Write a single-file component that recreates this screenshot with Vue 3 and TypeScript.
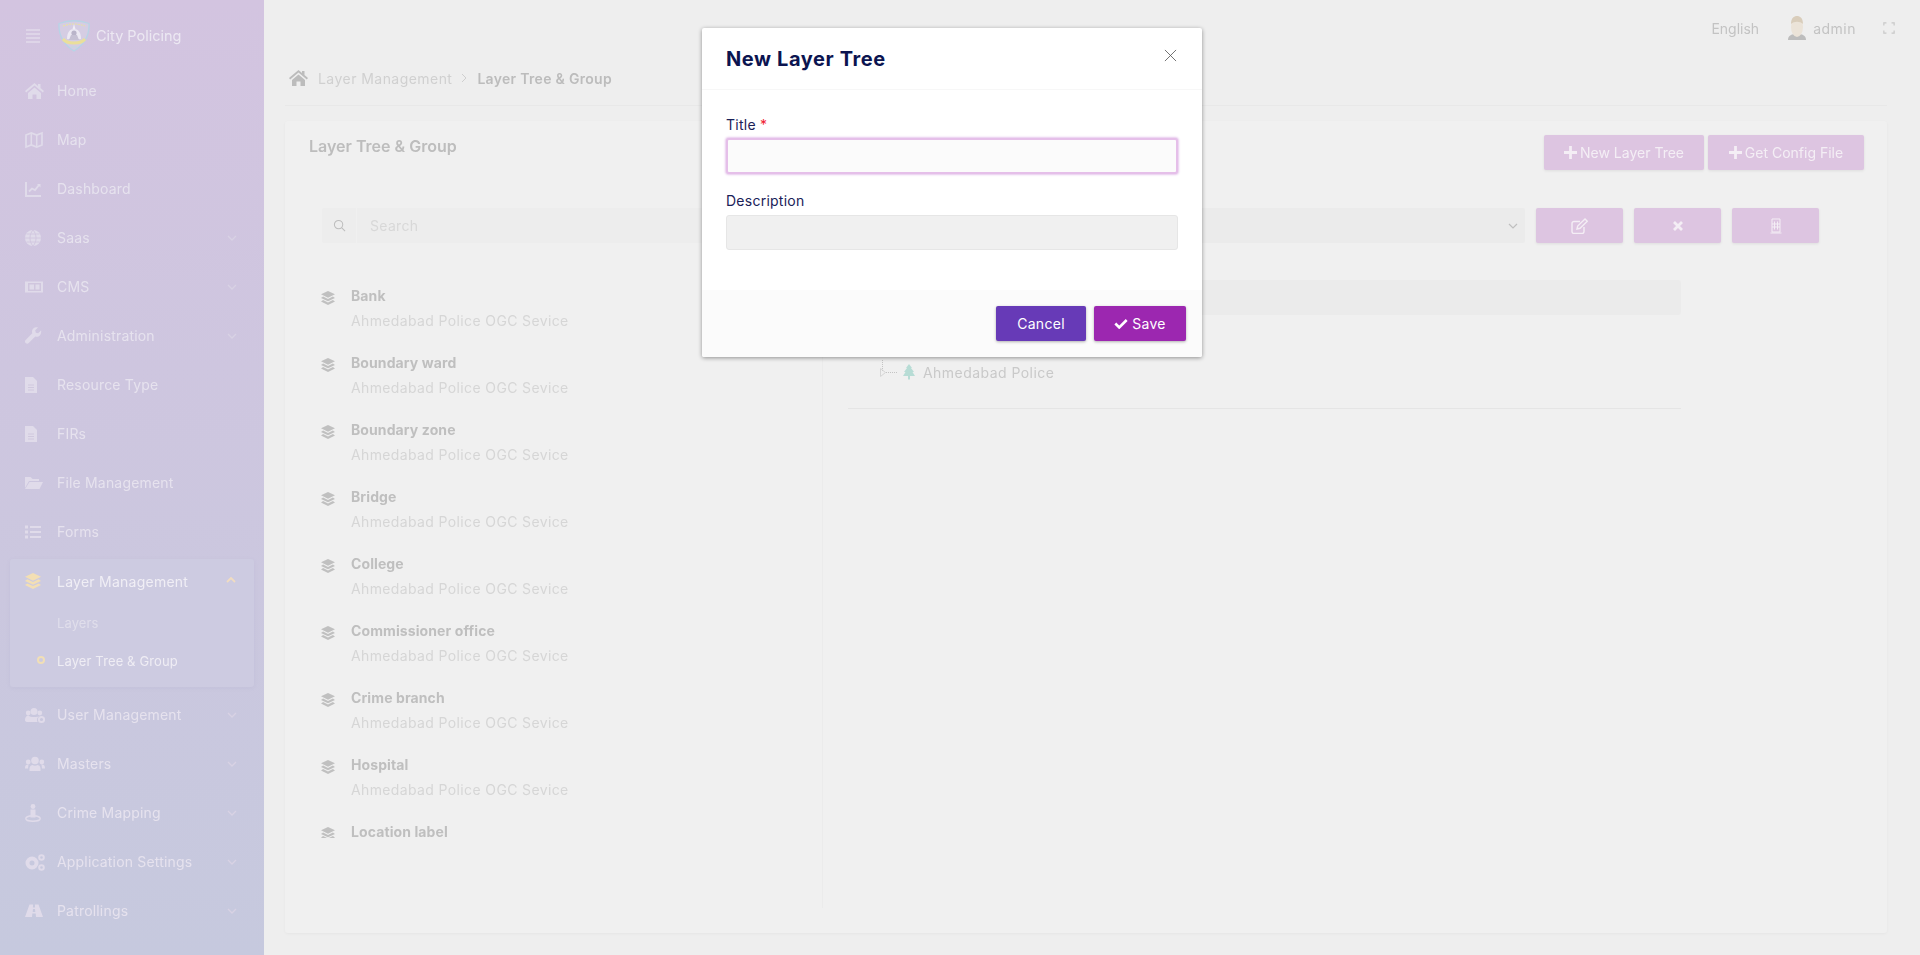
<template>
  <div class="root">
    <div class="page">
      <aside class="sidebar">
        <div class="brand">
          <svg class="burger" viewBox="0 0 14 14"><path d="M0 0h14v2H0zM0 4h14v2H0zM0 8h14v2H0zM0 12h14v2H0z" fill="currentColor" /></svg>
          <svg class="crest" viewBox="0 0 32 33">
            <path d="M1 4.500Q16 -1 31 4.500Q32 22 16 32Q0 22 1 4.500Z" fill="#d5cde3" stroke="#b7d4e6" stroke-width="1.300" />
            <path d="M5 7Q16 3 27 7" fill="none" stroke="#e7dfa8" stroke-width="1.200" stroke-dasharray="2 1" />
            <path d="M16 5l1.500 5h-3z" fill="#f0eef5" />
            <path d="M9 20c0-7 3-10 7-10s7 3 7 10z" fill="#ece9f3" />
            <circle cx="16" cy="14" r="2.600" fill="#b9b4c9" />
            <path d="M13 16h6l2 5H11z" fill="#c6c1d4" />
            <path d="M5 20Q8 24 16 24Q24 24 27 20" fill="none" stroke="#eadf9a" stroke-width="3" />
            <path d="M13 28h6" stroke="#c6d6e0" stroke-width="1.500" />
          </svg>
          <span class="brand-name">City Policing</span>
        </div>
        <nav class="menu">
          <div v-for="item in menuTop" :key="item.label" class="menu-item">
            <svg class="menu-icon" viewBox="0 0 20 20" v-html="icons[item.icon]"></svg>
            <span class="menu-label">{{ item.label }}</span>
            <svg v-if="item.arrow" class="chev" viewBox="0 0 10 6"><path d="M1 1l4 4 4-4" /></svg>
          </div>
          <div class="menu-open">
            <div class="menu-item open-head">
              <svg class="menu-icon active-icon" viewBox="0 0 20 20" v-html="icons.layers"></svg>
              <span class="menu-label active-label">Layer Management</span>
              <svg class="chev up" viewBox="0 0 10 6"><path d="M1 5l4-4 4 4" /></svg>
            </div>
            <div class="sub-item first">Layers</div>
            <div class="sub-item current"><i class="dot"></i>Layer Tree &amp; Group</div>
          </div>
          <div v-for="item in menuBottom" :key="item.label" class="menu-item">
            <svg class="menu-icon" viewBox="0 0 20 20" v-html="icons[item.icon]"></svg>
            <span class="menu-label">{{ item.label }}</span>
            <svg class="chev" viewBox="0 0 10 6"><path d="M1 1l4 4 4-4" /></svg>
          </div>
        </nav>
      </aside>

      <main class="content">
        <header class="topbar">
          <span class="lang">English</span>
          <span class="user">
            <svg class="avatar" viewBox="0 0 24 24">
              <path d="M3 24c0-5 4-6 9-6s9 1 9 6c-2 1-16 1-18 0z" fill="#bdbdbd" />
              <ellipse cx="12" cy="11" rx="6" ry="10" fill="#ebe3d8" />
              <path d="M6 8c0-6 3-8 6-8s6 2 6 8c-3-3-9-3-12 0z" fill="#d9cdbb" />
            </svg>
            <span class="user-name">admin</span>
          </span>
          <svg class="fullscreen" viewBox="0 0 14 14"><path d="M1 4V1h3M10 1h3v3M13 10v3h-3M4 13H1v-3" /></svg>
        </header>

        <div class="crumbs">
          <svg class="crumb-home" viewBox="0 0 20 20" v-html="icons.home"></svg>
          <span class="crumb">Layer Management</span>
          <svg class="crumb-sep" viewBox="0 0 6 10"><path d="M1 1l4 4-4 4" /></svg>
          <b class="crumb-current">Layer Tree &amp; Group</b>
        </div>

        <section class="card">
          <div class="card-head">
            <h2>Layer Tree &amp; Group</h2>
            <div class="head-actions">
              <button class="soft-btn new-tree"><svg class="plus" viewBox="0 0 14 14"><path d="M7 0v14M0 7h14" /></svg>New Layer Tree</button>
              <button class="soft-btn config"><svg class="plus" viewBox="0 0 14 14"><path d="M7 0v14M0 7h14" /></svg>Get Config File</button>
            </div>
          </div>
          <div class="card-body">
            <div class="left-col">
              <div class="search">
                <span class="search-icon">
                  <svg viewBox="0 0 14 14"><circle cx="6" cy="6" r="4.500" /><path d="M9.500 9.500L13 13" /></svg>
                </span>
                <span class="search-field">Search</span>
              </div>
              <ul class="groups">
                <li v-for="g in groups" :key="g.title">
                  <svg class="group-icon" viewBox="0 2 16 16" v-html="icons.layers"></svg>
                  <div>
                    <strong>{{ g.title }}</strong>
                    <p v-if="g.sub">{{ g.sub }}</p>
                  </div>
                </li>
              </ul>
            </div>
            <div class="right-col">
              <div class="selector">
                <div class="select">
                  <svg viewBox="0 0 10 6"><path d="M1 1l4 4 4-4" /></svg>
                </div>
                <button class="soft-btn tool">
                  <svg class="edit" viewBox="0 0 17 16"><path d="M13 9v4.500a2 2 0 0 1-2 2H3a2 2 0 0 1-2-2V5.500a2 2 0 0 1 2-2h6" /><path d="M6 11l.7-3 7.300-7 2.300 2.300-7.300 7z" /></svg>
                </button>
                <button class="soft-btn tool">
                  <svg class="cross" viewBox="0 0 12 12"><path d="M2 2l8 8M10 2l-8 8" /></svg>
                </button>
                <button class="soft-btn tool">
                  <svg class="door" viewBox="0 0 12 16"><path d="M2 1h8v13H2zM0.500 15h11M4.500 3.500v8M7.500 3.500v8M2 6h8M2 9h8" /></svg>
                </button>
              </div>
              <div class="tree-bar"></div>
              <div class="tree-node">
                <svg class="tree-lines" viewBox="0 0 22 24"><path class="dots" d="M2.500 0v12M6 12.500h11" /><path d="M.5 8.500l5 4-5 4z" /></svg>
                <svg class="tree-icon" viewBox="0 0 12 16"><path d="M6 0l3 4H8l3 4H9.500L12 12H7v3.500H5V12H0l2.500-4H1l3-4H3z" fill="#b7dcd5" /></svg>
                <span>Ahmedabad Police</span>
              </div>
              <div class="tree-rule"></div>
            </div>
          </div>
        </section>
      </main>
    </div>

    <div class="modal">
      <div class="modal-head">
        <h3>New Layer Tree</h3>
        <svg class="close" viewBox="0 0 14 14"><path d="M1 1l12 12M13 1L1 13" /></svg>
      </div>
      <div class="modal-body">
        <label class="field-label">Title <em>*</em></label>
        <input class="field focused" type="text" />
        <label class="field-label second">Description</label>
        <input class="field" type="text" />
      </div>
      <div class="modal-foot">
        <button class="btn cancel">Cancel</button>
        <button class="btn save">
          <svg viewBox="0 0 16 12"><path d="M1.500 6l4.500 4.500L14.500 2" /></svg>
          Save
        </button>
      </div>
    </div>
  </div>
</template>

<script setup lang="ts">
const icons: Record<string, string> = {
  home: '<path d="M9.500 2L0 10l1.200 1.400L9.500 4.600l8.300 6.800L19 10l-3.500-3V3H13v2z" fill="currentColor"/><path d="M9.500 6.500L3 12v6h4.500v-4.500h4V18H16v-6z" fill="currentColor"/>',
  map: '<path d="M1 5l5.300-2 5.400 2L17 3v12l-5.300 2-5.400-2L1 17z" fill="none" stroke="currentColor" stroke-width="1.700"/><path d="M6.300 3v12M11.700 5v12" stroke="currentColor" stroke-width="1.500"/>',
  chart: '<path d="M1 3v14h15" fill="none" stroke="currentColor" stroke-width="2"/><path d="M4 12.500l3-3 3 1.500 4-5" fill="none" stroke="currentColor" stroke-width="1.800"/><path d="M12 5h3.500v3.500z" fill="currentColor"/>',
  globe: '<circle cx="8" cy="10" r="8" fill="currentColor"/><path d="M0 10h16M8 2c-4 4-4 12 0 16M8 2c4 4 4 12 0 16M1.500 6h13M1.500 14h13" fill="none" stroke="#d2c8e0" stroke-width="1"/>',
  news: '<path d="M0 4.500h18v11H0z" fill="currentColor"/><path d="M3 6h13v8H3z" fill="#d0c6de"/><path d="M4.500 7.500h4.500v5H4.500zM10.500 7.500h4v5h-4z" fill="currentColor"/>',
  wrench: '<path d="M16 4.500l-2.800 2.800-2.400-.6-.6-2.400L13 1.500C10 .5 7 2.500 7 5.500c0 .7.100 1.300.3 1.800L.7 14c-1 1-1 2 0 3s2 1 3 0l6.600-6.600c3 1 6.200-1 5.900-5.900z" fill="currentColor"/>',
  file: '<path d="M0 2h8l4 4v12H0z" fill="currentColor"/><path d="M3 10h6M3 12.500h6M3 15h6" stroke="#d0c8de" stroke-width="1"/>',
  folder: '<path d="M0 4h5.500l2 2H14v2H4l-4 7z" fill="currentColor"/><path d="M4.500 9H18l-3.500 7H0z" fill="currentColor"/>',
  list: '<path d="M0 3.500h3v3H0zM0 8.500h3v3H0zM0 13.500h3v3H0zM5 4h11v2H5zM5 9h11v2H5zM5 14h11v2H5z" fill="currentColor"/>',
  layers: '<path d="M8 2l8 3.800-8 3.900-8-3.900z" fill="currentColor"/><path d="M2.400 8.300L0 9.900l8 3.900 8-3.900-2.400-1.600L8 11z" fill="currentColor"/><path d="M2.400 12.400L0 14l8 4 8-4-2.400-1.600L8 15.100z" fill="currentColor"/>',
  usercog: '<circle cx="9" cy="6.500" r="3.500" fill="currentColor"/><circle cx="3.200" cy="8" r="2.400" fill="currentColor"/><circle cx="14.800" cy="8" r="2.400" fill="currentColor"/><path d="M0 15c0-3 1.500-4.500 3.500-4.500 1 1 3 1.500 5.500 1.500s5-.5 5-.5c-2 1-2.500 3-1.500 5.500H3c-2 0-3-.5-3-2z" fill="currentColor"/><circle cx="16.500" cy="14.500" r="2.600" fill="none" stroke="currentColor" stroke-width="2"/>',
  users: '<circle cx="10" cy="6.500" r="3.800" fill="currentColor"/><circle cx="3.200" cy="8" r="2.400" fill="currentColor"/><circle cx="16.800" cy="8" r="2.400" fill="currentColor"/><path d="M4.500 17v-2.500c0-2.500 2-3.500 3-3.500 1.500 1 3.500 1 5 0 1 0 3 1 3 3.500V17zM0 14c0-2.500 1-3.500 3.500-3.500L3 14.500H0zM20 14c0-2.500-1-3.500-3.500-3.500l.5 4h3z" fill="currentColor"/>',
  pin: '<circle cx="8" cy="3.500" r="2.400" fill="currentColor"/><path d="M5.500 6.500h5v8h-5z" fill="currentColor"/><ellipse cx="8" cy="15.500" rx="7.200" ry="2.800" fill="none" stroke="currentColor" stroke-width="1.400"/>',
  cogs: '<circle cx="7" cy="11" r="4.500" fill="none" stroke="currentColor" stroke-width="4"/><circle cx="16.500" cy="5.500" r="2.300" fill="none" stroke="currentColor" stroke-width="2"/><circle cx="16.500" cy="15.500" r="2.300" fill="none" stroke="currentColor" stroke-width="2"/>',
  road: '<path d="M4.500 3.500h3.600l-.2 3h2.200l-.2-3h3.600L18 16h-7l-.3-3.500H7.300L7 16H0zM8 8l-.3 3h2.600L10 8z" fill="currentColor"/>',
}

const menuTop = [
  { label: 'Home', icon: 'home' },
  { label: 'Map', icon: 'map' },
  { label: 'Dashboard', icon: 'chart' },
  { label: 'Saas', icon: 'globe', arrow: true },
  { label: 'CMS', icon: 'news', arrow: true },
  { label: 'Administration', icon: 'wrench', arrow: true },
  { label: 'Resource Type', icon: 'file' },
  { label: 'FIRs', icon: 'file' },
  { label: 'File Management', icon: 'folder' },
  { label: 'Forms', icon: 'list' },
]

const menuBottom = [
  { label: 'User Management', icon: 'usercog' },
  { label: 'Masters', icon: 'users' },
  { label: 'Crime Mapping', icon: 'pin' },
  { label: 'Application Settings', icon: 'cogs' },
  { label: 'Patrollings', icon: 'road' },
]

const sub = 'Ahmedabad Police OGC Sevice'
const groups = [
  { title: 'Bank', sub },
  { title: 'Boundary ward', sub },
  { title: 'Boundary zone', sub },
  { title: 'Bridge', sub },
  { title: 'College', sub },
  { title: 'Commissioner office', sub },
  { title: 'Crime branch', sub },
  { title: 'Hospital', sub },
  { title: 'Location label', sub: '' },
]
</script>

<style>
html,
body {
  margin: 0;
  height: 100%;
  overflow: hidden;
  background: #eee;
}
</style>

<style scoped>
.root {
  width: 1920px;
  height: 955px;
  position: relative;
  overflow: hidden;
  font-family: Inter, "Open Sans", sans-serif;
  font-size: 14px;
  background: #eee;
}
.page {
  display: flex;
  height: 955px;
  filter: blur(0.7px);
}

/* sidebar */
.sidebar {
  width: 264px;
  flex: none;
  height: 955px;
  background: linear-gradient(180deg, #d3c4e0 0%, #c6c9de 100%);
  color: #e4deec;
}
.brand {
  height: 66px;
  display: flex;
  align-items: center;
  padding: 5px 0 0 26px;
  box-sizing: border-box;
}
.burger {
  width: 14px;
  height: 14px;
  color: #ded5e8;
}
.crest {
  width: 32px;
  height: 33px;
  margin-left: 18px;
}
.brand-name {
  margin-left: 6px;
  font-size: 14.5px;
  color: #ece8f2;
}
.menu {
  display: flex;
  flex-direction: column;
}
.menu-item {
  height: 49px;
  display: flex;
  align-items: center;
  padding: 0 18px 0 25px;
  box-sizing: border-box;
}
.menu-icon {
  width: 20px;
  height: 20px;
  flex: none;
  color: #e0dbea;
}
.menu-label {
  margin-left: 12px;
  color: #e6e2ee;
  letter-spacing: 0.18px;
  flex: 1;
}
.chev {
  width: 10px;
  height: 6px;
  margin-right: 9px;
  fill: none;
  stroke: #d8d2e4;
  stroke-width: 1.3;
}
.chev.up {
  stroke: #f1dcc0;
  stroke-width: 1.8;
  margin-right: 18px;
  margin-top: -2px;
}
.menu-open {
  margin: 3px 10px;
  height: 128px;
  background: #cdcbe1;
  box-shadow: 0 1px 4px rgba(120, 110, 160, 0.08);
  border-radius: 3px;
}
.open-head {
  padding-left: 15px;
  padding-right: 0;
  height: 44px;
}
.active-icon {
  color: #f3dfb4;
}
.active-label {
  color: #f0eef5;
  letter-spacing: 0.25px;
}
.sub-item {
  height: 37px;
  line-height: 37px;
  padding-left: 47px;
  font-size: 13px;
  letter-spacing: 0.12px;
  color: #e0deeb;
  position: relative;
}
.sub-item.first {
  margin-top: 2px;
  margin-bottom: 1px;
}
.sub-item.current {
  color: #efedf4;
}
.dot {
  position: absolute;
  left: 27px;
  top: 13px;
  width: 4px;
  height: 4px;
  border: 2px solid #f1dfb6;
  border-radius: 50%;
}

/* main */
.content {
  flex: 1;
  min-width: 0;
  padding: 0 33px 0 21px;
  box-sizing: border-box;
  background: #eee;
}
.topbar {
  height: 56px;
  display: flex;
  justify-content: flex-end;
  align-items: center;
  color: #c3c3c3;
}
.lang {
  margin-right: 26px;
}
.user {
  display: flex;
  align-items: center;
  gap: 4px;
}
.user-name {
  letter-spacing: 0.5px;
}
.avatar {
  width: 24px;
  height: 24px;
}
.fullscreen {
  width: 12px;
  height: 12px;
  margin-left: 27px;
  margin-right: -8px;
  fill: none;
  stroke: #c8c8c8;
  stroke-width: 1.4;
}
.crumbs {
  height: 44px;
  display: flex;
  align-items: center;
  border-bottom: 1px solid #e8e8e8;
  padding: 0 4px 5px;
}
.crumb-home {
  width: 20px;
  height: 20px;
  color: #bcbcbc;
}
.crumb {
  margin-left: 9px;
  color: #d0d0d0;
  letter-spacing: 0.45px;
}
.crumb-sep {
  width: 6px;
  height: 10px;
  margin: 0 10px 0 9px;
  fill: none;
  stroke: #cfcfcf;
  stroke-width: 1;
}
.crumb-current {
  font-weight: 600;
  color: #bcbcbc;
  letter-spacing: 0.3px;
}
.card {
  margin-top: 15px;
  height: 812px;
  background: #f0f0f0;
  border-radius: 3px;
  box-shadow: 0 1px 3px rgba(0, 0, 0, 0.04);
}
.card-head {
  display: flex;
  justify-content: space-between;
  padding: 14px 23px 0 24px;
  height: 73px;
  box-sizing: border-box;
}
.card-head h2 {
  margin: 1px 0 0;
  font-size: 16px;
  line-height: 20px;
  font-weight: 600;
  color: #bdbdbd;
}
.head-actions {
  display: flex;
  gap: 4px;
}
.soft-btn {
  height: 35px;
  border: none;
  border-radius: 2px;
  background: #ddc5e1;
  color: #f4eef5;
  font: inherit;
  padding: 0;
  box-shadow: 0 1px 3px rgba(0, 0, 0, 0.08);
  display: flex;
  align-items: center;
  justify-content: center;
}
.new-tree {
  width: 160px;
}
.config {
  width: 156px;
}
.plus {
  width: 13px;
  height: 13px;
  margin-right: 3px;
  fill: none;
  stroke: #f4eef5;
  stroke-width: 3;
}
.card-body {
  display: flex;
  padding-top: 14px;
}
.left-col {
  width: 538px;
  flex: none;
  padding-left: 37px;
  box-sizing: border-box;
  border-right: 1px solid #ebebeb;
  height: 700px;
}
.search {
  display: flex;
  height: 35px;
  background: #ededed;
  border-radius: 2px;
  width: 480px;
}
.search-icon {
  width: 34px;
  display: flex;
  align-items: center;
  justify-content: center;
  border-right: 1px solid #f0f0f0;
}
.search-icon svg {
  width: 13px;
  height: 13px;
  fill: none;
  stroke: #bdbdbd;
  stroke-width: 1.1;
}
.search-field {
  padding-left: 13px;
  line-height: 35px;
  color: #d8d8d8;
  letter-spacing: 0.3px;
}
.groups {
  list-style: none;
  margin: 44px 0 0 -1px;
  padding: 0;
}
.groups li {
  display: flex;
  height: 67px;
  gap: 16px;
}
.group-icon {
  width: 14px;
  height: 14px;
  margin-top: 4px;
  color: #c0c0c0;
  flex: none;
}
.groups li:last-child .group-icon {
  clip-path: inset(0 0 22% 0);
}
.groups strong {
  display: block;
  font-weight: 700;
  color: #bfbfbf;
  letter-spacing: 0.1px;
}
.groups p {
  margin: 8px 0 0;
  color: #d6d6d6;
  letter-spacing: 0.37px;
}
.right-col {
  flex: 1;
  padding-left: 25px;
  min-width: 0;
}
.selector {
  display: flex;
  align-items: center;
  gap: 11px;
  padding-right: 68px;
}
.select {
  flex: 1;
  height: 35px;
  background: #ebebeb;
  border-radius: 2px;
  display: flex;
  align-items: center;
  justify-content: flex-end;
  padding-right: 7px;
}
.select svg {
  width: 10px;
  height: 6px;
  fill: none;
  stroke: #bfbfbf;
  stroke-width: 1.2;
}
.tool {
  width: 87px;
}
.tool svg {
  fill: none;
  stroke: #f4eef5;
}
.edit {
  width: 17px;
  height: 16px;
  stroke-width: 1.4;
}
.cross {
  width: 12px;
  height: 12px;
  stroke-width: 2.8;
}
.door {
  width: 12px;
  height: 16px;
  stroke-width: 1;
}
.tree-bar {
  height: 35px;
  margin-top: 37px;
  width: 833px;
  background: #ebebeb;
  border-radius: 3px;
}
.tree-node {
  display: flex;
  align-items: center;
  height: 24px;
  margin-top: 45px;
  margin-left: 32px;
  color: #c9c9c9;
  letter-spacing: 0.45px;
}
.tree-lines {
  width: 22px;
  height: 24px;
  fill: none;
  stroke: #d6d6d6;
  stroke-width: 1;
}
.dots {
  stroke-dasharray: 1 1;
  stroke: #c4c4c4;
}
.tree-icon {
  width: 12px;
  height: 16px;
  margin: 0 8px 0 1px;
}
.tree-rule {
  width: 833px;
  margin-top: 24px;
  border-top: 1px solid #e5e5e5;
}

/* modal */
.modal {
  position: absolute;
  left: 702px;
  top: 28px;
  width: 500px;
  background: #fff;
  box-shadow: 0 1px 4px rgba(0, 0, 0, 0.4);
  border-radius: 2px;
  color: #0d1551;
}
.modal-head {
  height: 61px;
  display: flex;
  align-items: center;
  justify-content: space-between;
  padding: 0 25px 0 24px;
  border-bottom: 1px solid #f7f7f7;
}
.modal-head h3 {
  margin: 0;
  font-size: 20px;
  font-weight: 700;
  color: #0b1450;
  letter-spacing: 0.6px;
}
.close {
  width: 13px;
  height: 13px;
  margin-top: -6px;
  fill: none;
  stroke: #555;
  stroke-width: 0.9;
}
.modal-body {
  padding: 26px 24px 0;
  height: 200px;
  box-sizing: border-box;
}
.field-label {
  display: block;
  line-height: 18px;
  color: #1a2158;
  letter-spacing: 0.25px;
}
.field-label em {
  color: #f02030;
  font-style: normal;
}
.field-label.second {
  margin-top: 18px;
}
.field {
  display: block;
  width: 452px;
  height: 35px;
  box-sizing: border-box;
  margin-top: 5px;
  background: #f0f0f0;
  border: 1px solid #e6e6e6;
  border-radius: 3px;
  outline: none;
}
.field.focused {
  height: 36px;
  margin-top: 4px;
  background: #fbfbfb;
  border: 2px solid #e5bfe9;
  box-shadow: 0 0 2px 1px rgba(170, 60, 190, 0.28);
}
.modal-foot {
  height: 67px;
  background: #fbfbfb;
  display: flex;
  justify-content: flex-end;
  gap: 8px;
  padding: 16px 16px 0;
  box-sizing: border-box;
  border-radius: 0 0 2px 2px;
}
.btn {
  height: 35px;
  border: none;
  border-radius: 2px;
  color: #fff;
  font: inherit;
  letter-spacing: 0.3px;
  box-shadow: 0 1px 3px rgba(0, 0, 0, 0.3);
  display: flex;
  align-items: center;
  justify-content: center;
}
.cancel {
  width: 90px;
  background: #673ab7;
}
.save {
  width: 92px;
  background: #9c27b0;
  gap: 4px;
}
.save svg {
  width: 14px;
  height: 11px;
  fill: none;
  stroke: #fff;
  stroke-width: 3;
}
</style>
